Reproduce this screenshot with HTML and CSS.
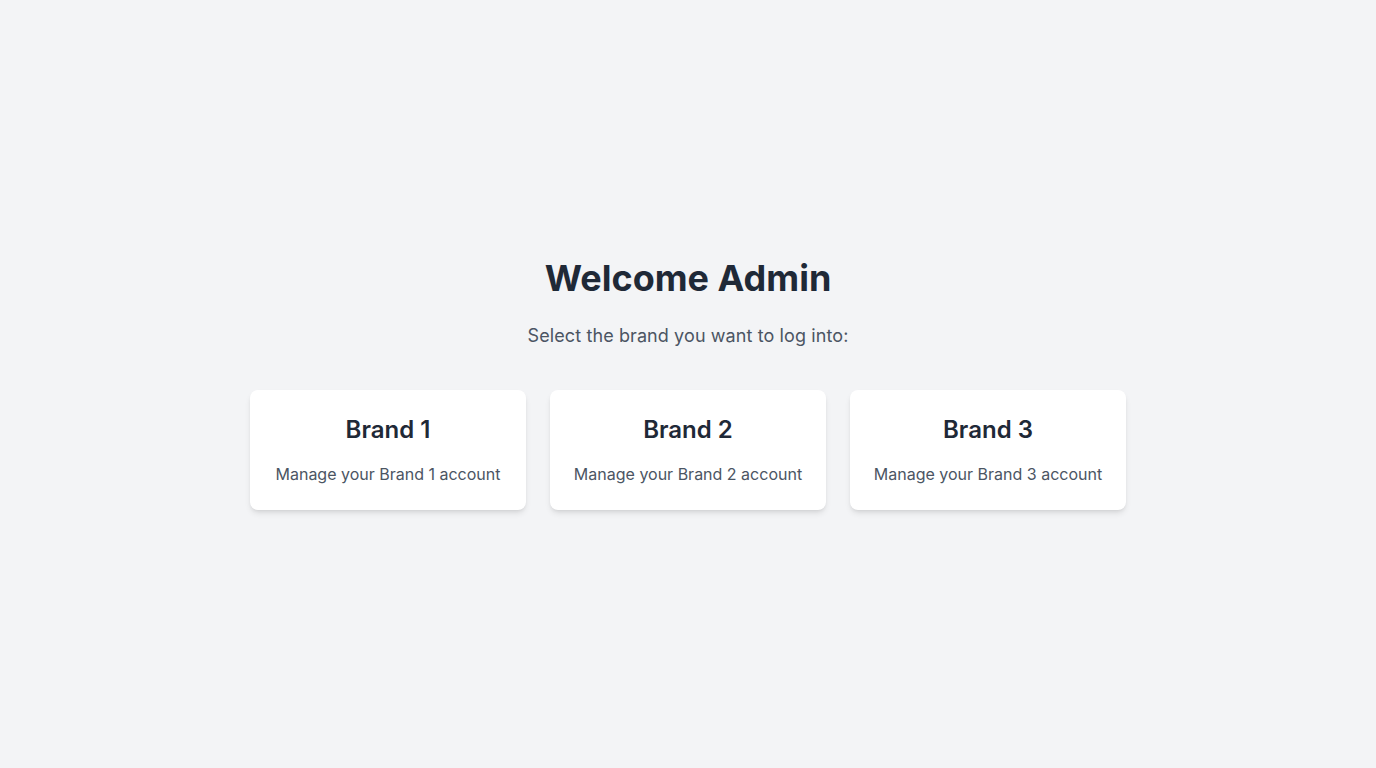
FILE: index.html
```html
<!DOCTYPE html>
<html lang="en">
<head>
<meta charset="utf-8">
<title>Welcome Admin</title>
<link rel="stylesheet" href="styles.css">
</head>
<body>
<main class="page">
  <div class="content">
    <h1 class="title">Welcome Admin</h1>
    <p class="subtitle">Select the brand you want to log into:</p>
    <div class="brands">
      <a class="card" href="#">
        <h2 class="card-title">Brand 1</h2>
        <p class="card-text">Manage your Brand 1 account</p>
      </a>
      <a class="card" href="#">
        <h2 class="card-title">Brand 2</h2>
        <p class="card-text">Manage your Brand 2 account</p>
      </a>
      <a class="card" href="#">
        <h2 class="card-title">Brand 3</h2>
        <p class="card-text">Manage your Brand 3 account</p>
      </a>
    </div>
  </div>
</main>
</body>
</html>
```
FILE: styles.css
```css
* { box-sizing: border-box; }
html, body { margin: 0; padding: 0; }
body {
  background: #f3f4f6;
  font-family: Inter, "Noto Sans", sans-serif;
  color: #1f2937;
}
.page {
  min-height: 100vh;
  display: flex;
  align-items: center;
  justify-content: center;
}
.content {
  width: 876px;
  text-align: center;
}
.title {
  margin: 0 0 24px;
  font-size: 36px;
  line-height: 40px;
  font-weight: 700;
  color: #1f2937;
}
.subtitle {
  margin: 0 0 40px;
  font-size: 18px;
  line-height: 28px;
  color: #4b5563;
  letter-spacing: 0.1px;
}
.brands {
  display: grid;
  grid-template-columns: repeat(3, 1fr);
  gap: 24px;
}
.card {
  display: block;
  background: #fff;
  border-radius: 8px;
  padding: 24px 12px;
  text-decoration: none;
  box-shadow: 0 4px 6px -1px rgba(0,0,0,0.1), 0 2px 4px -2px rgba(0,0,0,0.1);
}
.card-title {
  margin: 0 0 16px;
  font-size: 24px;
  line-height: 32px;
  font-weight: 600;
  color: #1f2937;
}
.card-text {
  margin: 0;
  font-size: 16px;
  line-height: 24px;
  color: #4b5563;
  white-space: nowrap;
}
```
